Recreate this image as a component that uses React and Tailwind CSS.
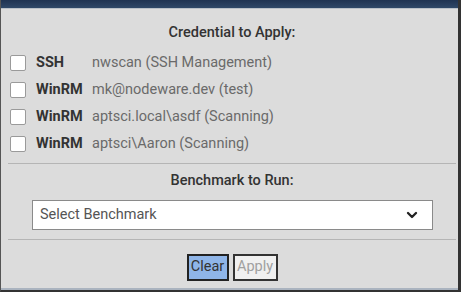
import { ChevronDown } from 'lucide-react';

const creds = [
  { type: 'SSH', name: 'nwscan (SSH Management)' },
  { type: 'WinRM', name: 'mk@nodeware.dev (test)' },
  { type: 'WinRM', name: 'aptsci.local\\asdf (Scanning)' },
  { type: 'WinRM', name: 'aptsci\\Aaron (Scanning)' },
];

export default function App() {
  return (
    <div className="w-[461px] h-[292px] flex flex-col bg-[#dcdcdc] border-l border-r-[3px] border-b-[2px] border-l-[#555] border-r-[#333] border-b-[#333] font-['Roboto',sans-serif] overflow-hidden">
      {/* header strip */}
      <div className="h-[8px] shrink-0 bg-gradient-to-b from-[#1f3352] to-[#2f4868]" />
      <div className="h-px shrink-0 bg-[#b9c0c8]" />

      <div className="flex-1 flex flex-col pl-[7px] pr-[2px]">
        <div className="text-center text-[14.5px] text-[#333] font-medium mt-[15px] leading-[17px]">
          Credential to Apply:
        </div>

        {/* credential list */}
        <div className="flex flex-col gap-[11px] mt-[14px] pl-[2px]">
          {creds.map((c, i) => (
            <label key={i} className="flex items-center h-[16px]">
              <span className="w-[16px] h-[16px] bg-white border border-[#9a9a9a] rounded-[2px] shrink-0" />
              <span className="ml-[10px] w-[56px] text-[14.5px] font-bold text-[#333] shrink-0">{c.type}</span>
              <span className="text-[14.5px] text-[#6a6a6a]">{c.name}</span>
            </label>
          ))}
        </div>

        <div className="h-px bg-[#b5b5b5] mt-[11px]" />

        <div className="text-center text-[14.5px] text-[#333] font-medium mt-[8px] leading-[17px]">
          Benchmark to Run:
        </div>

        <div className="ml-[24px] mr-[23px] mt-[11px] h-[30px] bg-white border border-[#8a8a8a] flex items-center justify-between pl-[7px] pr-[12px]">
          <span className="text-[14.5px] text-[#555]">Select Benchmark</span>
          <ChevronDown size={16} strokeWidth={3.5} className="text-[#222]" />
        </div>

        <div className="h-px bg-[#b5b5b5] mt-[9px]" />

        <div className="flex justify-center gap-[4px] mt-[14px]">
          <button className="h-[27px] w-[42px] bg-[#8fb5e8] border-2 border-[#222] text-[14.5px] text-[#333] leading-none">
            Clear
          </button>
          <button className="h-[27px] w-[45px] bg-[#f0f0f0] border-2 border-[#333] text-[14.5px] text-[#a0a0a0] leading-none">
            Apply
          </button>
        </div>
      </div>
      <div className="h-[2px] shrink-0 bg-[#aab3bf]" />
    </div>
  );
}
